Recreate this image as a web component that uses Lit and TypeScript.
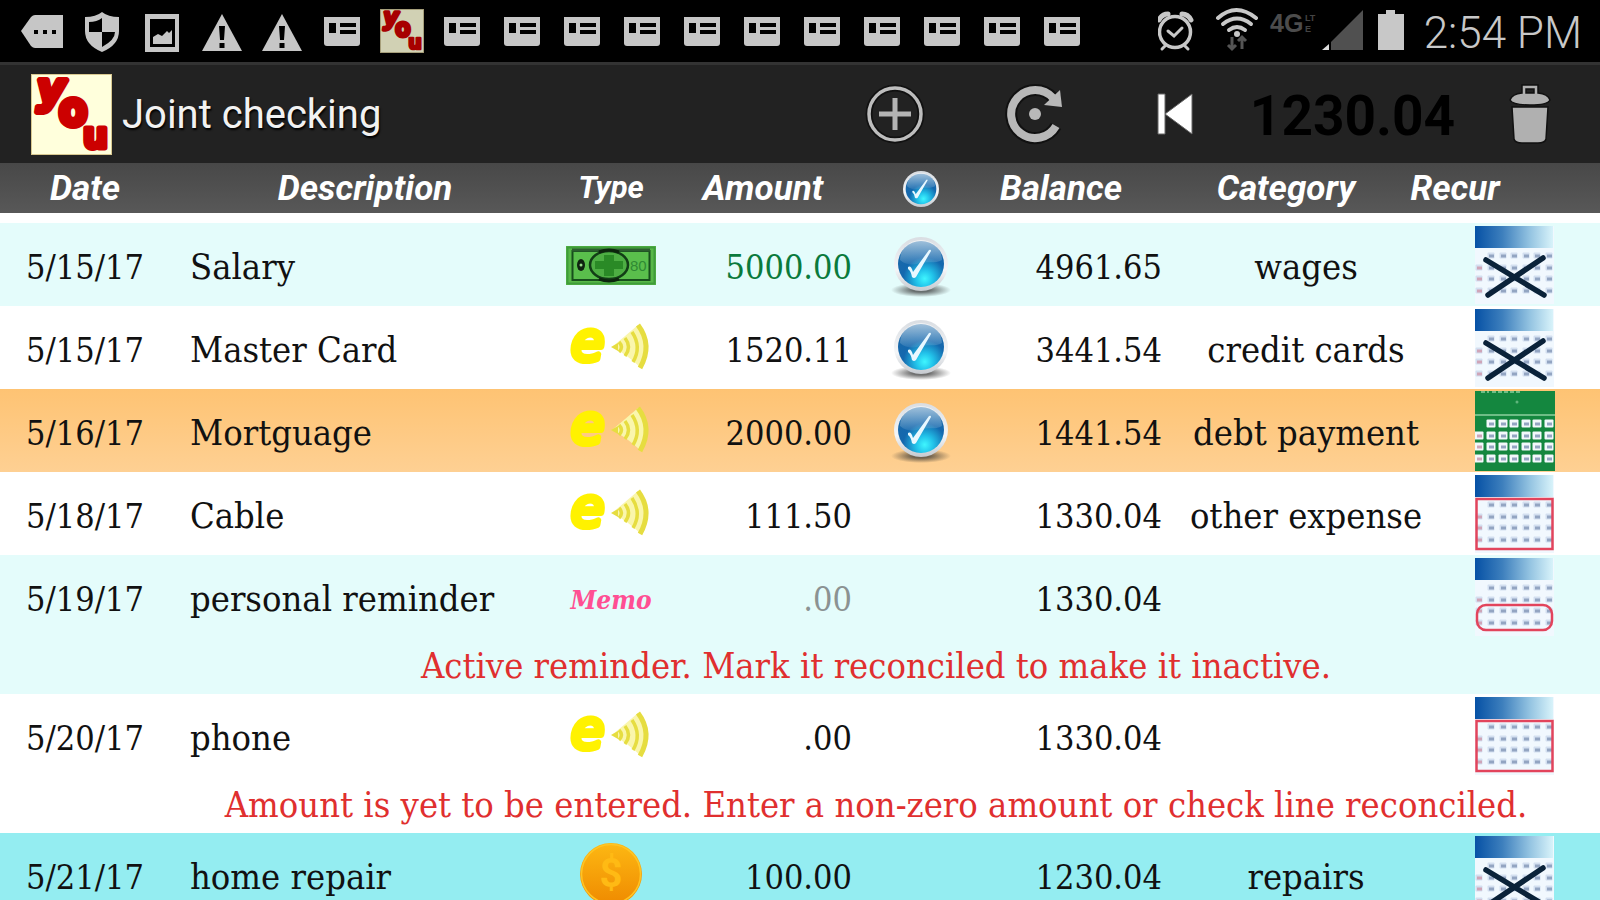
import { LitElement, html, svg, css, nothing } from "lit";
import { customElement, property } from "lit/decorators.js";
import { classMap } from "lit/directives/class-map.js";

type Kind = "cash" | "electronic" | "memo" | "coin";
type Recur = "none" | "daily" | "monthly" | "weekly";

interface Entry {
  date: string;
  description: string;
  kind: Kind;
  amount: string;
  amountTone?: "income" | "muted";
  reconciled: boolean;
  balance: string;
  category: string;
  recur: Recur;
  tone: "tint" | "plain" | "selected" | "bright";
  note?: string;
}

const ENTRIES: Entry[] = [
  { date: "5/15/17", description: "Salary", kind: "cash", amount: "5000.00", amountTone: "income", reconciled: true, balance: "4961.65", category: "wages", recur: "none", tone: "tint" },
  { date: "5/15/17", description: "Master Card", kind: "electronic", amount: "1520.11", reconciled: true, balance: "3441.54", category: "credit cards", recur: "none", tone: "plain" },
  { date: "5/16/17", description: "Mortguage", kind: "electronic", amount: "2000.00", reconciled: true, balance: "1441.54", category: "debt payment", recur: "daily", tone: "selected" },
  { date: "5/18/17", description: "Cable", kind: "electronic", amount: "111.50", reconciled: false, balance: "1330.04", category: "other expense", recur: "monthly", tone: "plain" },
  { date: "5/19/17", description: "personal reminder", kind: "memo", amount: ".00", amountTone: "muted", reconciled: false, balance: "1330.04", category: "", recur: "weekly", tone: "tint", note: "Active reminder. Mark it reconciled to make it inactive." },
  { date: "5/20/17", description: "phone", kind: "electronic", amount: ".00", reconciled: false, balance: "1330.04", category: "", recur: "monthly", tone: "plain", note: "Amount is yet to be entered. Enter a non-zero amount or check line reconciled." },
  { date: "5/21/17", description: "home repair", kind: "coin", amount: "100.00", reconciled: false, balance: "1230.04", category: "repairs", recur: "none", tone: "bright" },
];

@customElement("you-logo")
export class YouLogo extends LitElement {
  static styles = css`
    :host { display: block; }
    .art { display: block; width: 100%; height: 100%; overflow: visible; }
    .letter { font-family: "DejaVu Sans", sans-serif; font-weight: 700; fill: #cc0000; stroke: #cc0000; stroke-linejoin: round; }
    .letter.round { font-weight: 400; }
  `;
  render() {
    return html`<svg class="art" viewBox="0 0 81 81" role="img" aria-label="You">
      <rect x=".5" y=".5" width="80" height="80" fill="#ffffdc" stroke="#d8c890" />
      <text class="letter" x="6" y="29" font-size="43" stroke-width="6" font-style="italic">y</text>
      <text class="letter round" x="29" y="50" font-size="43" stroke-width="9">o</text>
      <text class="letter" x="52" y="74" font-size="35" stroke-width="5">u</text>
    </svg>`;
  }
}

@customElement("check-badge")
export class CheckBadge extends LitElement {
  @property({ type: Boolean }) flat = false;
  static styles = css`
    :host { display: block; }
    .art { display: block; width: 100%; height: 100%; }
  `;
  render() {
    return html`<svg class="art" viewBox=${this.flat ? "3 1 54 54" : "0 -3 60 64"} aria-hidden="true">
      <defs>
        <radialGradient id="shade"><stop offset=".3" stop-color="#333" stop-opacity=".7" /><stop offset="1" stop-color="#333" stop-opacity="0" /></radialGradient>
        <linearGradient id="ring" x2="0" y2="1"><stop stop-color="#d9dde2" /><stop offset=".6" stop-color="#f4f6f8" /><stop offset="1" stop-color="#c5c9cf" /></linearGradient>
        <radialGradient id="ball" cx=".58" cy=".82" r=".85"><stop stop-color="#3ff6ff" /><stop offset=".22" stop-color="#22c3ea" /><stop offset=".55" stop-color="#1468ae" /><stop offset="1" stop-color="#1c69a8" /></radialGradient>
        <linearGradient id="gloss" x2="0" y2="1"><stop stop-color="#fff" stop-opacity=".6" /><stop offset="1" stop-color="#fff" stop-opacity=".08" /></linearGradient>
      </defs>
      ${this.flat ? nothing : svg`<ellipse cx="30" cy="54" rx="30" ry="7" fill="url(#shade)" />`}
      <circle cx="30" cy="28" r="27" fill="url(#ring)" />
      <circle cx="30" cy="28" r="23" fill="url(#ball)" />
      <path d="M9 24a21 20 0 0 1 42 0c-7 4-14 1-21 3s-14 3-21-3z" fill="url(#gloss)" />
      <path d="M17 31q3-2 5 5L38 14q2-1 2 1L25 41q-2 2-4 0-1-6-4-8z" fill="#e8f8ff" />
    </svg>`;
  }
}

@customElement("type-icon")
export class TypeIcon extends LitElement {
  @property() kind: Kind = "cash";
  static styles = css`
    :host { display: block; }
    .art { display: block; width: 90px; height: 64px; overflow: visible; }
    .e { font: italic 400 54px "DejaVu Sans", sans-serif; fill: #fff200; stroke: #fff200; stroke-width: 6; stroke-linejoin: round; }
    .dollar { font: 700 40px Roboto, sans-serif; fill: #ffba14; text-anchor: middle; }
    .serial { font: 15px "Liberation Sans", sans-serif; fill: #2f8a33; }
    .memo { font: italic 700 26px/32px "DejaVu Serif Condensed", "Noto Serif", serif; color: #ff4f93; }
  `;
  render() {
    switch (this.kind) {
      case "cash":
        return html`<svg class="art" viewBox="0 0 90 64" role="img" aria-label="Cash">
          <rect x="0" y="13" width="90" height="39" fill="#58b848" />
          <rect x="1.5" y="14.500" width="87" height="36" fill="none" stroke="#3f9c3a" stroke-width="2" />
          <rect x="6.500" y="18" width="77" height="29" fill="#5abf4c" stroke="#174f1c" stroke-width="2" />
          <path d="M6 17h78" stroke="#2c5d2f" stroke-width="3" />
          <ellipse cx="43" cy="32" rx="19" ry="14" fill="#4dae43" stroke="#123e16" stroke-width="2.500" />
          <path d="M38 22h10v6h9v8h-9v7H38v-7h-9v-8h9z" fill="#2a8a26" />
          <path d="M33 19q10-4 20 0M33 46q10 4 20 0" stroke="#0c240d" stroke-width="3" fill="none" />
          <ellipse cx="15" cy="32" rx="4" ry="6" fill="#0f2310" /><circle cx="15" cy="32" r="1.5" fill="#9adf8c" />
          <text class="serial" x="64" y="38">80</text>
        </svg>`;
      case "electronic":
        return html`<svg class="art" viewBox="0 0 90 64" role="img" aria-label="Electronic">
          <text class="e" x="5" y="44">e</text>
          <path d="M46 31 Q58 21 72 9 Q88 30 74 51 Q60 38 46 31z" fill="#faf6ac" />
          <g fill="none" stroke="#e6dd40" stroke-width="3.500">
            <path d="M53 26q5 5 0 10" /><path d="M59 22q7 9 0 18" /><path d="M66 16q10 15 1 30" /><path d="M72 9q15 20 2 43" stroke-width="5" />
          </g>
          <path d="M45 31l7-4v8z" fill="#e6dd40" />
        </svg>`;
      case "coin":
        return html`<svg class="art" viewBox="0 0 90 64" role="img" aria-label="Coin">
          <defs><linearGradient id="g" x2="0" y2="1"><stop stop-color="#fdb813" /><stop offset="1" stop-color="#ef8a00" /></linearGradient></defs>
          <circle cx="45" cy="31" r="31" fill="url(#g)" />
          <circle cx="45" cy="31" r="29.500" fill="none" stroke="#ffc423" stroke-width="1.500" />
          <text class="dollar" x="45" y="44">$</text>
        </svg>`;
      default:
        return html`<span class="memo">Memo</span>`;
    }
  }
}

const DOT_X = [4, 16, 28, 39, 51, 62, 74];
const DOT_Y = [30, 42, 53, 65];

@customElement("recur-icon")
export class RecurIcon extends LitElement {
  @property() kind: Recur = "none";
  static styles = css`
    :host { display: block; }
    .art { display: block; width: 80px; height: 80px; }
  `;
  private dots(fill: string, size: number) {
    return DOT_Y.map((y, r) =>
      DOT_X.filter((_, c) => r > 0 || c > 0).map(
        (x) => svg`<rect x=${x - size / 2} y=${y - size / 2} width=${size} height=${size - 1} rx="1" fill=${fill} />
          <path d="M${x - 2} ${y}h5" stroke=${x === 4 ? "#cfa5b8" : "#93a5c2"} stroke-width="3" />`,
      ),
    );
  }
  render() {
    if (this.kind === "daily") {
      return html`<svg class="art" viewBox="0 0 80 80" role="img" aria-label="Repeats daily">
        <rect width="80" height="80" fill="#14873f" />
        <path d="M0 24h80" stroke="#8ccf9f" stroke-width="1.5" />
        <path d="M6 1h8M17 1h30" stroke="#8ccf9f" stroke-width="1.5" stroke-dasharray="4 2" />
        <circle cx="42" cy="11" r="1.5" fill="#5fb57c" />
        ${svg`<g transform="translate(0 3)">${this.dots("#f2f8fb", 9)}</g>`}
      </svg>`;
    }
    return html`<svg class="art" viewBox="0 -1 80 80" role="img" aria-label=${"Repeats: " + this.kind}>
      <defs><linearGradient id="b"><stop stop-color="#0651a5" /><stop offset=".35" stop-color="#3d7fbd" /><stop offset=".7" stop-color="#93c3e1" /><stop offset="1" stop-color="#d8f3fa" /></linearGradient></defs>
      <rect width="79" height="78" fill="#f1f8fe" />
      <rect width="78" height="22" fill="url(#b)" />
      ${this.dots("#d3dff0", 7)}
      ${this.kind === "none" ? svg`<path d="M11 34L69 69M68 32L13 69" stroke="#0a2239" stroke-width="5.500" stroke-linecap="round" />` : nothing}
      ${this.kind === "monthly" ? svg`<rect x="1.500" y="24" width="76" height="50" fill="none" stroke="#e2445c" stroke-width="2.500" />` : nothing}
      ${this.kind === "weekly" ? svg`<rect x="2" y="47" width="75" height="25" rx="9" fill="none" stroke="#e2445c" stroke-width="2.500" />` : nothing}
    </svg>`;
  }
}

const card = html`<svg class="glyph" viewBox="0 0 44 44" aria-hidden="true">
  <path d="M4 8h36v26q0 3-3 3H7q-3 0-3-3z" fill="#c6c6c6" />
  <path d="M9 14h7v10H9zM20 14h16v4H20zM20 21h16v4H20z" fill="#000" />
</svg>`;
const warning = html`<svg class="glyph" viewBox="0 0 44 44" aria-hidden="true">
  <path d="M22 5L42 42H2z" fill="#c6c6c6" />
  <path d="M19 17h6l-1 14h-4zM19.500 34h5v5h-5z" fill="#000" />
</svg>`;
const more = html`<svg class="glyph" viewBox="0 0 44 44" aria-hidden="true">
  <path d="M1 22L11 8q2-2 4-2h28v33H15q-2 0-4-2z" fill="#c6c6c6" />
  <path d="M14 21h4v4h-4zM23 21h4v4h-4zM32 21h4v4h-4z" fill="#000" />
</svg>`;
const shield = html`<svg class="glyph" viewBox="0 0 44 44" aria-hidden="true">
  <path d="M22 3q6 5 17 5v14q0 14-17 21Q5 36 5 22V8q11 0 17-5z" fill="#c6c6c6" />
  <path d="M22 9v14H9V13q8 0 13-4zM22 23h13q0 8-13 15z" fill="#000" />
</svg>`;
const picture = html`<svg class="glyph" viewBox="0 0 44 44" aria-hidden="true">
  <path d="M5 5h34v38H5z" fill="#c6c6c6" /><path d="M10 10h25v28H10z" fill="#000" />
  <path d="M13 35V28l5-3 4 2 5-5 2 2 3-3v14z" fill="#c6c6c6" />
</svg>`;

@customElement("app-root")
export class AppRoot extends LitElement {
  static styles = css`
    :host { display: block; height: 100vh; overflow: hidden; background: #fff; color: #111; font-family: Roboto, sans-serif; }
    .status { display: flex; align-items: center; justify-content: space-between; height: 62px; padding: 0 18px 0 12px; background: #000; color: #c8c8c8; }
    .notices { display: flex; }
    .notice { display: flex; justify-content: center; width: 60px; }
    .glyph { display: block; width: 44px; height: 44px; }
    .mini-logo { width: 44px; height: 44px; opacity: .82; }
    .system { display: flex; align-items: center; }
    .sys { display: block; width: 250px; height: 62px; }
    .net { font: 700 25px "Liberation Sans", sans-serif; fill: #4c4c4c; }
    .net-small { font: 700 9px "Liberation Sans", sans-serif; fill: #444; }
    .clock { margin-left: 16px; padding-top: 4px; font-size: 44px; line-height: 58px; font-weight: 300; white-space: nowrap; }
    .bar { display: flex; align-items: center; height: 98px; border-top: 3px solid #333; background: #222; }
    .logo { width: 81px; height: 81px; margin-left: 31px; }
    .title { flex: 1; margin: 0; padding: 2px 0 0 10px; color: #f2f2f2; font-size: 40px; font-weight: 400; line-height: 48px; text-shadow: 1px 2px 2px #000; }
    .tool { display: flex; align-items: center; justify-content: center; width: 140px; height: 98px; padding: 0; border: 0; background: none; }
    .tool.end { width: 140px; }
    .tool-art { display: block; width: 64px; height: 64px; }
    .total { width: 215px; padding-top: 4px; text-align: center; color: #000; font-size: 55px; line-height: 64px; font-weight: 700; }
    .ledger { display: block; }
    .head, .body { display: block; }
    .columns { display: grid; grid-template-columns: 170fr 390fr 102fr 202fr 114fr 166fr 284fr 54fr 118fr; align-items: center; height: 50px; background: linear-gradient(#484848, #585858); }
    .label { display: flex; justify-content: center; min-width: 0; padding: 2px 0 0; color: #fff; font-size: 35px; line-height: 40px; font-weight: 700; font-style: italic; white-space: nowrap; }
    .label.small { padding: 0; font-size: 31px; }
    .head-check { width: 36px; height: 36px; }
    .body { padding-top: 10px; font-family: "DejaVu Serif Condensed", "Noto Serif", serif; font-size: 36px; line-height: 40px; }
    .row { display: grid; grid-template-columns: 170fr 392fr 98fr 192fr 138fr 172fr 288fr 130fr 20fr; grid-template-rows: 83px auto; align-items: center; }
    .row.tint { background: #e4fcfb; }
    .row.plain { background: #fff; }
    .row.selected { background: linear-gradient(#fec373, #fed093); }
    .row.bright { background: #94edf1; }
    .cell { min-width: 0; padding: 0; white-space: nowrap; }
    .words, .figures { padding-top: 4px; }
    .figures { font-size: 34px; }
    .date { padding-left: 26px; }
    .description { padding-left: 20px; }
    .center { display: flex; justify-content: center; }
    .right { text-align: right; }
    .income { color: #0a7a3c; }
    .muted { color: #8b9292; }
    .tick { display: grid; width: 60px; height: 64px; }
    .tick-input { grid-area: 1 / 1; width: 100%; height: 100%; margin: 0; opacity: 0; }
    .tick-art { grid-area: 1 / 1; pointer-events: none; }
    .recur { padding: 0; border: 0; background: none; }
    .note { grid-column: 1 / -1; padding: 8px 0 8px 152px; color: #e02f2f; text-align: center; white-space: nowrap; }
  `;

  private renderStatus() {
    return html`<div class="status">
      <div class="notices">
        ${[more, shield, picture, warning, warning, card].map((g) => html`<span class="notice">${g}</span>`)}
        <span class="notice"><you-logo class="mini-logo"></you-logo></span>
        ${Array.from({ length: 11 }, () => html`<span class="notice">${card}</span>`)}
      </div>
      <div class="system">
        <svg class="sys" viewBox="0 0 250 62" role="img" aria-label="Alarm, Wi-Fi, 4G LTE, battery">
          <g fill="none" stroke="#c8c8c8" stroke-linecap="round">
            <circle cx="17" cy="32" r="15.500" stroke-width="3.500" />
            <path d="M10 31l6 5 8-8" stroke-width="3" />
            <path d="M1 20q3-6 9-6M33 20q-3-6-9-6" stroke-width="5" />
            <path d="M7 46l-3 3M27 46l3 3" stroke-width="3" />
            <path d="M60 18q18-16 38 0" stroke-width="4" />
            <path d="M65 24q14-11 28 0" stroke-width="4" />
            <path d="M71 30q8-6 16 0" stroke-width="4" />
          </g>
          <circle cx="79" cy="34" r="3" fill="#c8c8c8" />
          <path d="M74 37v12m-4-4l4 4 4-4M84 49V37m-4 4l4-4 4 4" fill="none" stroke="#555" stroke-width="3" />
          <text class="net" x="112" y="32">4G</text>
          <text class="net-small" x="147" y="21">LT</text>
          <text class="net-small" x="147" y="32">E</text>
          <path d="M205 10v40h-32V42z" fill="#505050" />
          <path d="M171 44v6h-7z" fill="#ddd" />
          <path d="M220 14h8v-4h9v4h9v36h-26z" fill="#c8c8c8" />
        </svg>
        <span class="clock">2:54 PM</span>
      </div>
    </div>`;
  }

  private renderBar() {
    return html`<header class="bar">
      <you-logo class="logo"></you-logo>
      <h1 class="title">Joint checking</h1>
      <button class="tool" aria-label="Add entry">
        <svg class="tool-art" viewBox="0 0 64 64"><circle cx="32" cy="32" r="26" fill="none" stroke="#111" stroke-width="7" /><circle cx="32" cy="32" r="26" fill="none" stroke="#bdbdbd" stroke-width="3.500" /><path d="M32 16v32M16 32h32" stroke="#b4b4b4" stroke-width="5" /></svg>
      </button>
      <button class="tool" aria-label="Refresh">
        <svg class="tool-art" viewBox="0 0 64 64"><path d="M53 44A24 24 0 1 1 50 16" fill="none" stroke="#111" stroke-width="12" /><path d="M53 44A24 24 0 1 1 50 16" fill="none" stroke="#b8b8b8" stroke-width="8" /><path d="M57 8l2 17-18-2z" fill="#b8b8b8" /><circle cx="32" cy="32" r="6" fill="#b8b8b8" /></svg>
      </button>
      <button class="tool" aria-label="Back to start">
        <svg class="tool-art" viewBox="0 0 64 64"><path d="M15 12h7v40h-7zM49 12v40L22 32z" fill="#fff" stroke="#666" stroke-width="1" /></svg>
      </button>
      <output class="total">1230.04</output>
      <button class="tool end" aria-label="Delete">
        <svg class="tool-art" viewBox="0 0 64 64"><g stroke="#111" stroke-width="1.500"><path d="M14 25h36l-2 32q-1 4-8 4H24q-7 0-8-4z" fill="#b0b0b0" /><path d="M12 18q2-6 12-7V3h16v8q10 1 12 7-2 5-20 5t-20-5z" fill="#b0b0b0" /><path d="M28 7h8v4h-8z" fill="#222" /></g></svg>
      </button>
    </header>`;
  }

  private renderRow(e: Entry) {
    return html`<tr class=${classMap({ row: true, [e.tone]: true })}>
      <td class="cell figures date">${e.date}</td>
      <td class="cell words description">${e.description}</td>
      <td class="cell center"><type-icon .kind=${e.kind}></type-icon></td>
      <td class=${classMap({ cell: true, figures: true, right: true, income: e.amountTone === "income", muted: e.amountTone === "muted" })}>${e.amount}</td>
      <td class="cell center">
        <label class="tick">
          <input class="tick-input" type="checkbox" aria-label=${"Reconciled: " + e.description} .checked=${e.reconciled} />
          ${e.reconciled ? html`<check-badge class="tick-art"></check-badge>` : nothing}
        </label>
      </td>
      <td class="cell figures right">${e.balance}</td>
      <td class="cell words center">${e.category}</td>
      <td class="cell center"><button class="recur" aria-label="Recurrence"><recur-icon .kind=${e.recur}></recur-icon></button></td>
      ${e.note ? html`<td class="note">${e.note}</td>` : nothing}
    </tr>`;
  }

  render() {
    return html`
      ${this.renderStatus()}
      ${this.renderBar()}
      <table class="ledger">
        <thead class="head">
          <tr class="columns">
            <th class="label">Date</th>
            <th class="label">Description</th>
            <th class="label small">Type</th>
            <th class="label">Amount</th>
            <th class="label"><check-badge class="head-check" flat></check-badge></th>
            <th class="label">Balance</th>
            <th class="label">Category</th>
            <th class="label">Recur</th>
          </tr>
        </thead>
        <tbody class="body">
          ${ENTRIES.map((e) => this.renderRow(e))}
        </tbody>
      </table>
    `;
  }
}
